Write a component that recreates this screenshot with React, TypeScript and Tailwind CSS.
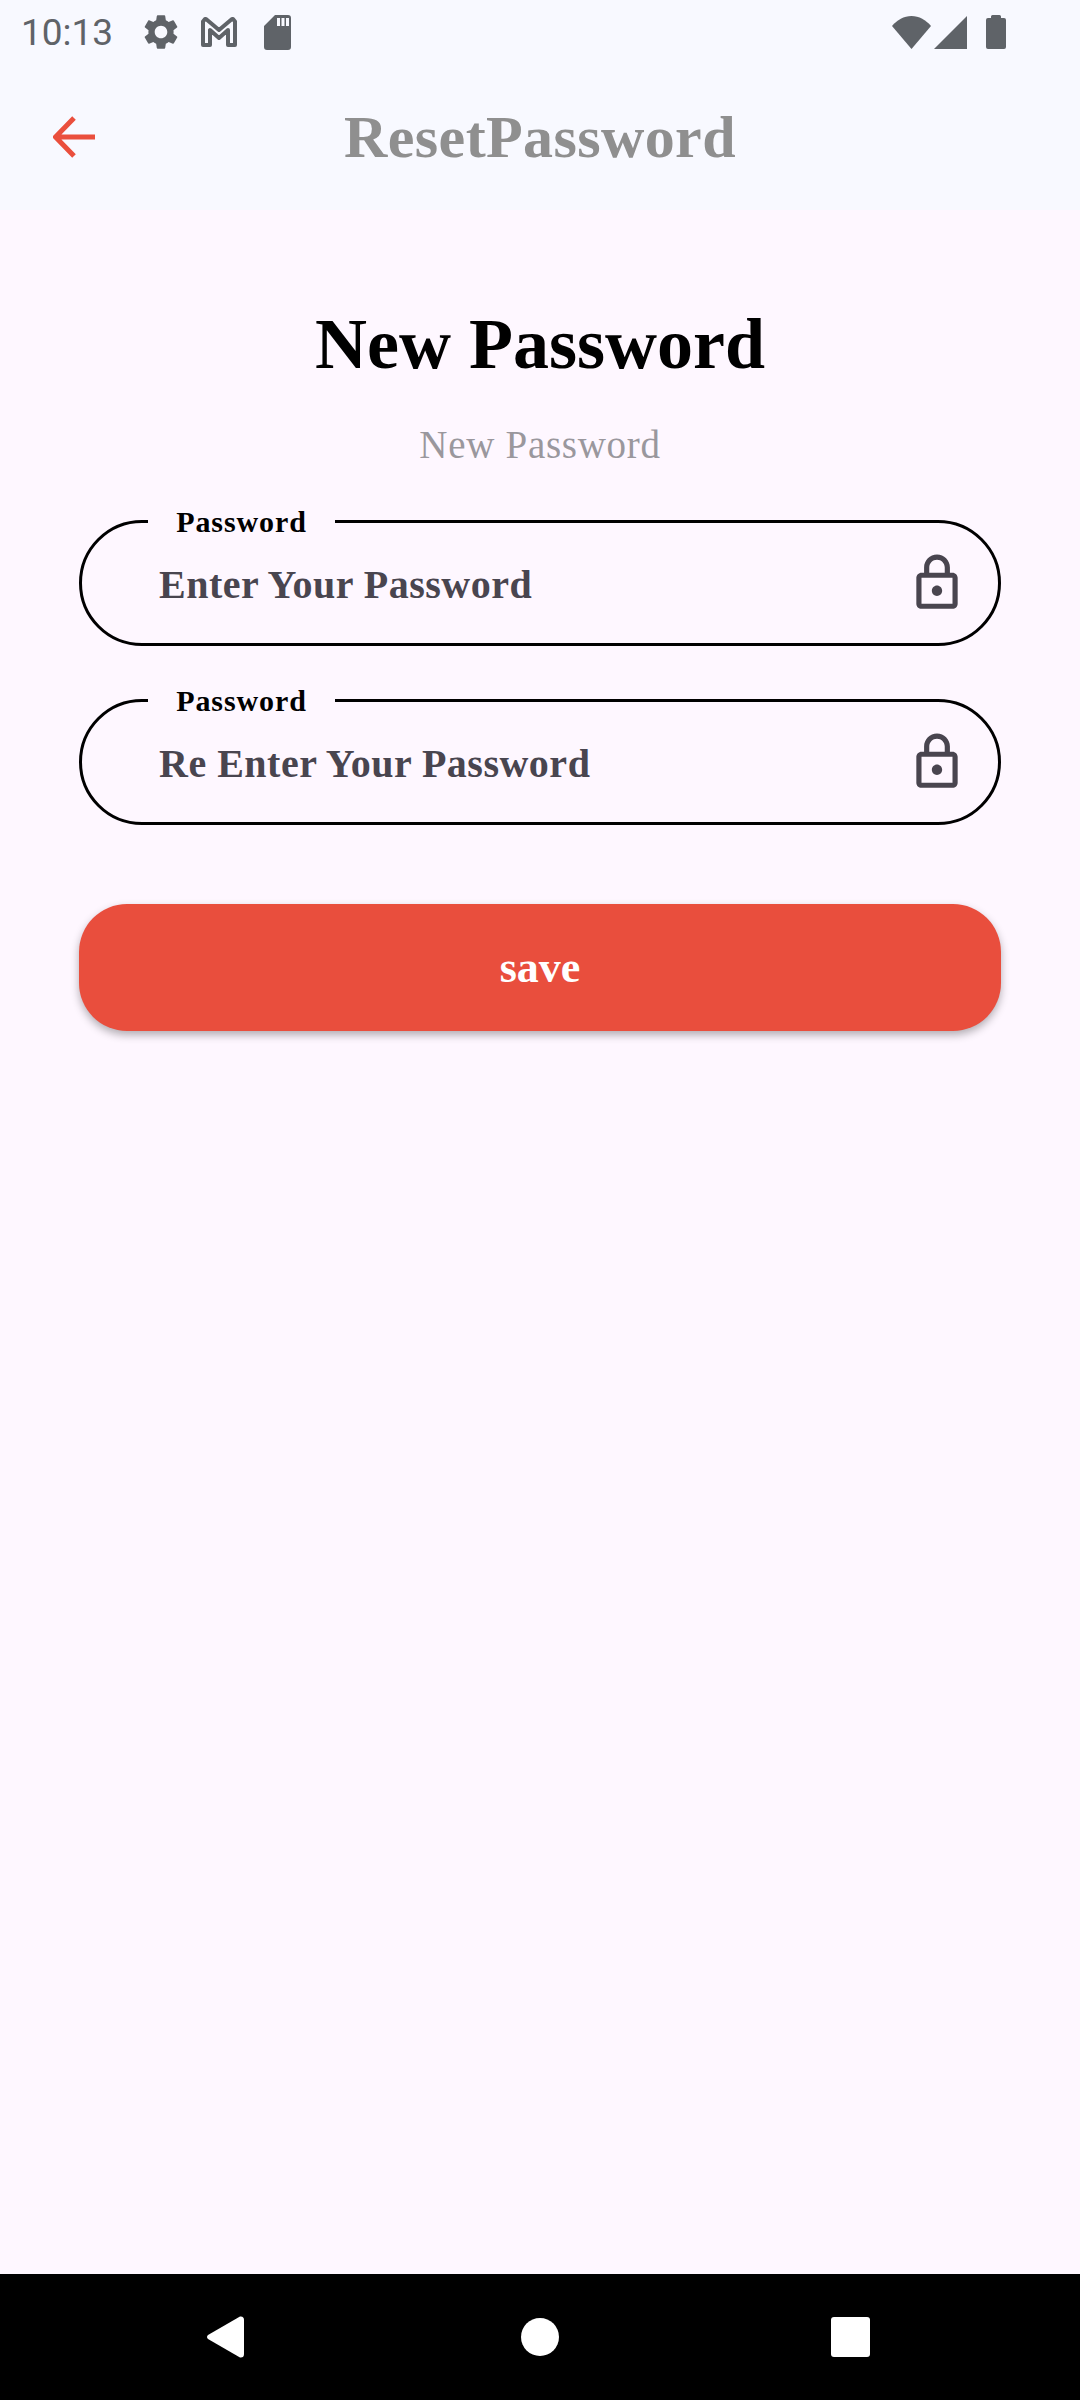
function Lock() {
  return (
    <svg viewBox="0 0 24 24" className="w-[62px] h-[62px] fill-[#49454f]">
      <path d="M18 8h-1V6c0-2.76-2.24-5-5-5S7 3.24 7 6v2H6c-1.1 0-2 .9-2 2v10c0 1.1.9 2 2 2h12c1.1 0 2-.9 2-2V10c0-1.1-.9-2-2-2zM9 6c0-1.66 1.34-3 3-3s3 1.34 3 3v2H9V6zm9 14H6V10h12v10zm-6-3c1.1 0 2-.9 2-2s-.9-2-2-2-2 .9-2 2 .9 2 2 2z" />
    </svg>
  );
}

function PasswordField({ placeholder }: { placeholder: string }) {
  return (
    <div className="relative h-[126px] rounded-[63px] border-[3px] border-black flex items-center pl-[77px] pr-[30px]">
      <span className="absolute left-[66px] top-[-19px] h-[36px] w-[187px] flex items-center justify-center bg-[#fef7ff] text-[30px] leading-[36px] font-bold tracking-[0.9px] text-black">
        Password
      </span>
      <span className="flex-1 pt-[4px] text-[40px] font-bold tracking-[0.5px] text-[#49454f]">{placeholder}</span>
      <Lock />
    </div>
  );
}

function App() {
  return (
    <div className="w-[1080px] h-[2400px] flex flex-col bg-[#fef7ff] font-['Liberation_Serif',serif]">
      <header className="h-[210px] bg-[#f8f9ff] flex flex-col">
        <div className="h-[64px] flex items-center pl-[21px] pr-[74px] fill-[#5f6368]">
          <span className="font-['Roboto',sans-serif] text-[37px] leading-none text-[#5f6368] w-[119px]">10:13</span>
          <svg viewBox="0 0 24 24" className="w-[42px] h-[42px]">
            <path d="M19.14 12.94c.04-.3.06-.61.06-.94 0-.32-.02-.64-.07-.94l2.03-1.58a.49.49 0 0 0 .12-.61l-1.92-3.32a.488.488 0 0 0-.59-.22l-2.39.96c-.5-.38-1.03-.7-1.62-.94l-.36-2.54a.484.484 0 0 0-.48-.41h-3.84c-.24 0-.43.17-.47.41l-.36 2.54c-.59.24-1.13.57-1.62.94l-2.39-.96c-.22-.08-.47 0-.59.22L2.74 8.87c-.12.21-.08.47.12.61l2.03 1.58c-.05.3-.09.63-.09.94s.02.64.07.94l-2.03 1.58a.49.49 0 0 0-.12.61l1.92 3.32c.12.22.37.29.59.22l2.39-.96c.5.38 1.03.7 1.62.94l.36 2.54c.05.24.24.41.48.41h3.84c.24 0 .44-.17.47-.41l.36-2.54c.59-.24 1.13-.56 1.62-.94l2.39.96c.22.08.47 0 .59-.22l1.92-3.32c.12-.22.07-.47-.12-.61l-2.01-1.58zM12 15.600c-1.98 0-3.6-1.62-3.6-3.6s1.62-3.6 3.6-3.6 3.6 1.62 3.6 3.6-1.62 3.6-3.6 3.6z" />
          </svg>
          <svg viewBox="0 0 36 30" className="w-[36px] h-[30px] ml-[19px] fill-none stroke-[#5f6368] stroke-[4px]">
            <path d="M2 28V4.500L4 2h1l13 11L31 2h1l2 2.500V28H27V13L18 21 9 13V28Z" strokeLinejoin="round" />
          </svg>
          <svg viewBox="0 0 27 35" className="w-[27px] h-[35px] ml-[27px]">
            <path fillRule="evenodd" d="M11 0h13a3 3 0 0 1 3 3v29a3 3 0 0 1-3 3H3a3 3 0 0 1-3-3V11ZM13 3v8h3V3Zm4.500 0v8h3V3ZM22 3v8h3V3Z" />
          </svg>
          <div className="flex-1" />
          <svg viewBox="0 0 39 33" className="w-[39px] h-[33px]">
            <path d="M0 10C5 4 12 0 19.500 0S34 4 39 10L19.500 33Z" />
          </svg>
          <svg viewBox="0 0 33 33" className="w-[33px] h-[33px] ml-[3px]">
            <path d="M33 0V33H0Z" />
          </svg>
          <svg viewBox="0 0 20 34" className="w-[20px] h-[34px] ml-[19px]">
            <path d="M5 3V1.500Q5 0 6.500 0h7Q15 0 15 1.500V3h3a2 2 0 0 1 2 2v27a2 2 0 0 1-2 2H2a2 2 0 0 1-2-2V5a2 2 0 0 1 2-2Z" />
          </svg>
        </div>
        <div className="relative flex-1 flex items-center justify-center">
          <svg viewBox="0 0 42 42" className="absolute left-[53px] top-[52px] w-[42px] h-[42px] fill-none stroke-[#ea4f3d] stroke-[5px]">
            <path d="M42 21H3M21 2 2.500 21 21 40" />
          </svg>
          <span className="text-[60px] font-bold tracking-[0.4px] text-[#8f8f8f]">ResetPassword</span>
        </div>
      </header>

      <main className="flex-1 px-[79px] flex flex-col">
        <h1 className="mt-[99px] h-[70px] flex items-center justify-center text-[72px] font-bold text-black">New Password</h1>
        <p className="mt-[44px] h-[44px] flex items-center justify-center text-[39px] tracking-[0.7px] text-[#9a979d]">New Password</p>
        <div className="mt-[53px] flex flex-col gap-[53px]">
          <PasswordField placeholder="Enter Your Password" />
          <PasswordField placeholder="Re Enter Your Password" />
        </div>
        <button className="mt-[79px] h-[127px] rounded-[48px] bg-[#e94e3d] shadow-[0_4px_8px_rgba(0,0,0,0.3)] text-[44px] font-bold text-white">
          save
        </button>
      </main>

      <nav className="h-[126px] bg-black flex items-center pl-[207px]">
        <svg viewBox="0 0 37 42" className="w-[37px] h-[42px] fill-white">
          <path d="M1 23 33 41.500Q37 42 37 38V4Q37 0 33 .5L1 19Q-1 21 1 23Z" />
        </svg>
        <div className="ml-[277px] w-[38px] h-[38px] rounded-full bg-white" />
        <div className="ml-[272px] w-[39px] h-[40px] rounded-[3px] bg-white" />
      </nav>
    </div>
  );
}

export default App;
